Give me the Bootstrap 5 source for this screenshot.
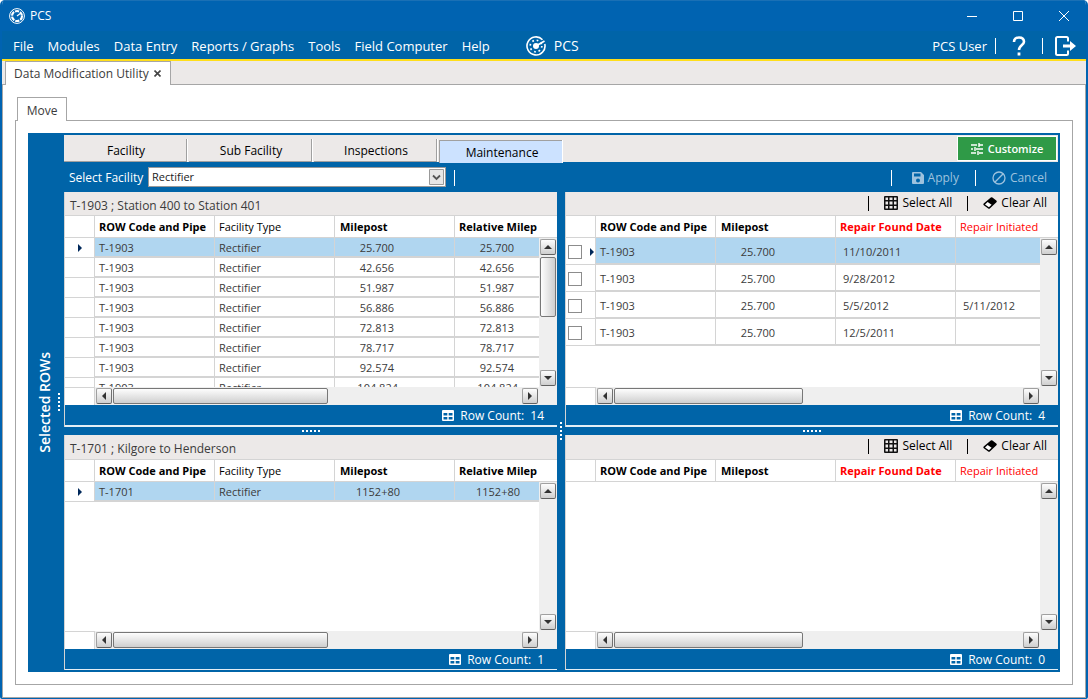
<!DOCTYPE html>
<html lang="en">
<head>
<meta charset="utf-8">
<meta name="viewport" content="width=device-width, initial-scale=1">
<title>PCS - Data Modification Utility</title>
<link href="https://cdn.jsdelivr.net/npm/bootstrap@5.3.0/dist/css/bootstrap.min.css" rel="stylesheet">
<style>
:root{--pcs:#0064a8;--strip:#ece9e8;--edge:#a6a6a6;--grid:#d4d4d4}
body{font-family:"Open Sans","Noto Sans",sans-serif;font-size:12px;line-height:16px;color:#3b3b3b;background:#fff}
button{font:inherit;line-height:inherit}
.app{height:100vh;min-height:560px;border:2px solid #0063b1;border-top:0;border-bottom-width:1px;border-radius:5px 5px 2px 2px;overflow:hidden;background:#fff}
.titlebar{height:31px;background:#0063b1;color:#fff;padding-left:6px;border-top:1px solid #1a70b5}
.winbtn{width:46px;height:30px;border:0;background:none;color:#fff;padding:0;display:flex;align-items:center;justify-content:center}
.winbtns{margin-right:-1px}
.menubar{height:28px;background:var(--pcs);color:#fff;font-size:13px;padding:1px 9px 0 11px}
.menubar a,.menubar button{color:#fff;text-decoration:none}
.menubar .links{gap:14px;padding-top:1px}
.brandtext{font-size:14px}
.iconbtn{border:0;background:none;padding:0;display:flex;align-items:center}
.vsep{width:1px;height:16px;background:#fff}
.vsep-dark{width:1px;height:15px;background:#000}
.tabstrip{height:26px;background:var(--strip);border-top:2px solid #ffde1a;padding-left:3px;border-bottom:1px solid var(--edge)}
.doctab{height:24px;border:1px solid var(--edge);border-bottom:0;background:#fff;padding:0 9px 0 8px;gap:5px;position:relative;z-index:1}
.workarea{padding:12px;border:solid var(--edge);border-width:0 1px 1px}
.workarea,.frame,.bluebox,.desk{min-height:0;min-width:0}
.movetab{height:25px;width:50px;margin:0 0 -1px 2px;border:1px solid var(--edge);border-bottom:0;background:#fff;z-index:1;padding:2px 0 0;color:#3b3b3b}
.frame{border:1px solid var(--edge);padding:12px}
.bluebox{background:var(--pcs);padding:0 2px 2px 0}
.sidebar{width:36px;flex:none;position:relative}
.sidebar .caption{writing-mode:vertical-rl;transform:rotate(180deg);color:#fff;font-size:14px;font-weight:600;line-height:20px;position:absolute;left:7px;top:50%;margin-top:-50px}
.dots-v{width:2px;height:18px;background:repeating-linear-gradient(#fff 0 2px,transparent 2px 4px)}
.dots-h{width:18px;height:2px;background:repeating-linear-gradient(90deg,#fff 0 2px,transparent 2px 4px)}
.modes{height:27px;background:var(--strip);margin-top:2px;padding:1px 1px 0 0}
.mode{width:123px;height:23px;margin:3px 2px 0 0;border:solid #a0a0a0;border-width:0 1px 1px 0;box-shadow:1px 0 #fff;background:var(--strip);color:#000;padding:2px 0 0 2px}
.mode.on{background:#cce2ff;border-width:1px 0 0 1px;margin-top:4px;padding-top:1px}
.customize{height:25px;width:100px;background:#2f9a47;border:1px solid #27843c;outline:1px solid #fff;outline-offset:-1px;color:#fff;font-size:11px;font-weight:600;padding:0;gap:5px}
.toolbar{height:30px;color:#fff;padding:1px 11px 0 5px}
.toolbar label{width:78px;margin-right:1px}
.combo{width:298px;height:20px;border-radius:0;border:1px solid #999;background:#fff;font-size:11px;color:#222;padding:0 20px 0 3px;appearance:none;line-height:16px}
.combowrap{position:relative;margin-top:-2px}
.combowrap svg{position:absolute;right:2px;top:2px;pointer-events:none}
.toolbar .act{color:#9dc2de;border:0;background:none;padding:0;display:flex;align-items:center;gap:4px}
.panels{display:grid;grid-template-columns:1fr 8px 1fr;grid-template-rows:1fr 8px 1fr;min-height:0}
.hsplit,.vsplit{display:flex;align-items:center;justify-content:center}
.vsplit{grid-column:2;grid-row:1/4}
.panel{min-width:0;min-height:0;display:grid;grid-template-rows:23px 1fr 18px 22px;background:#fff;border-left:1px solid var(--grid)}
.panelhead{background:var(--strip);padding:6px 11px 0 5px;color:#3b3b3b}
.panelhead .tools{gap:15px;margin-top:-3px}
.panelhead button{color:#000;border:0;background:none;padding:0;display:flex;align-items:center;gap:4px}
.gridarea{display:grid;grid-template-columns:1fr 18px;min-height:0;min-width:0}
.view{overflow:hidden;min-width:0;min-height:0}
.data{table-layout:fixed;width:510px;border-collapse:separate;border-spacing:0;font-size:11px;line-height:16px}
.data th,.data td{padding:0 4px;border-right:1px solid var(--grid);overflow:hidden;white-space:nowrap}
.data th{height:23px;border-top:1px solid var(--grid);border-bottom:1px solid var(--grid);font-weight:400;color:#000}
.data th.strong{font-weight:700}
.data th.mile{padding-left:5px}
.data .need{color:#f00}
.data td{height:20px;border-bottom:2px solid var(--grid);padding-top:1px}
.data td:first-child{border-bottom-width:1px;text-align:center;padding:0}
.data.tall td{height:27px;padding-top:2px}
.data .n{text-align:right;padding-right:60px}
.data .wide{padding-right:56px}
.data .st{padding-right:54px}
.data .d{padding-left:7px}
.data .cur td:not(:first-child){background:#b0d6f0}
.data.tall .pick{display:flex;align-items:center;justify-content:space-between;padding:0 1px 0 2px}
.pick input{appearance:none;width:14px;height:14px;border:1px solid #8c8c8c;background:#fff;margin:0}
.arrow{display:inline-block;border:solid transparent;border-width:4px 0 4px 4px;border-left-color:#00285a}
.vbar{display:grid;grid-template-rows:23px 1fr}
.vbar .corner{border:solid var(--grid);border-width:1px 0}
.vtrack{background:#efefef;display:flex;flex-direction:column;padding:1px;min-height:0}
.sbtn{width:16px;height:16px;flex:none;border:1px solid #707070;border-color:#a0a0a0 #707070 #606060 #a0a0a0;border-radius:2px;background:linear-gradient(#fdfdfd,#cfcfcf);padding:0;display:flex;align-items:center;justify-content:center;color:#333}
.vrun,.hrun{flex:1;min-width:0;min-height:0}
.vthumb{width:16px;margin-top:2px;border:1px solid #777;border-radius:2px;background:linear-gradient(90deg,#fdfdfd,#cfcfcf)}
.hthumb{height:16px;margin-left:1px;border:1px solid #777;border-radius:2px;background:linear-gradient(#fdfdfd,#cfcfcf)}
.hbar{display:flex}
.hbar .stub{width:30px;border:solid var(--grid);border-width:1px 1px 0 0}
.htrack{flex:1;background:#efefef;display:flex;padding:1px 19px 1px 1px;min-width:0}
.foot{background:var(--pcs);color:#fff;border-bottom:1px solid #e4eef5;padding:1px 13px 0 0;gap:6px}
.upper .foot{border-bottom-width:2px}
.lower.panel{grid-template-rows:24px 1fr 18px 21px}
</style>
</head>
<body>
<svg width="0" height="0" class="d-none" aria-hidden="true">
  <symbol id="up" viewBox="0 0 8 8"><path d="M0 6 4 2l4 4z" fill="#333"/></symbol>
  <symbol id="down" viewBox="0 0 8 8"><path d="M0 2l4 4 4-4z" fill="#333"/></symbol>
  <symbol id="prev" viewBox="0 0 8 8"><path d="M6 0 2 4l4 4z" fill="#333"/></symbol>
  <symbol id="next" viewBox="0 0 8 8"><path d="M2 0l4 4-4 4z" fill="#333"/></symbol>
  <symbol id="rows" viewBox="0 0 12 11"><path fill="#fff" fill-rule="evenodd" d="M1 0h10q1 0 1 1v9q0 1-1 1H1q-1 0-1-1V1q0-1 1-1zM1.500 3v2.500h3.800V3zm5.200 0v2.500h3.800V3zM1.500 7v2.500h3.800V7zm5.200 0v2.500h3.800V7z"/></symbol>
  <symbol id="cells" viewBox="0 0 14 14"><path fill="#111" fill-rule="evenodd" d="M1 0h12q1 0 1 1v12q0 1-1 1H1q-1 0-1-1V1q0-1 1-1zM1.500 1.500v2.500H4V1.500zm4 0v2.500h3V1.500zm4.500 0v2.500h2.500V1.500zM1.500 5.500v3H4v-3zm4 0v3h3v-3zm4.500 0v3h2.500v-3zM1.500 10v2.500H4V10zm4 0v2.500h3V10zm4.500 0v2.500h2.500V10z"/></symbol>
  <symbol id="eraser" viewBox="0 0 14 12"><path fill="#000" d="M7.800.6Q8.600 0 9.400.6l3.900 3q.9.800.1 1.700L6.800 11.400q-.8.600-1.600 0L.8 8.200q-.9-.8-.1-1.700z"/><path fill="#fff" d="M4.600 5 2 7.400l3.900 2.900 2.700-2.500z"/></symbol>
</svg>
<div class="app d-flex flex-column">
  <header>
    <div class="titlebar d-flex align-items-center">
      <svg width="18" height="18" viewBox="0 0 18 18" fill="none" stroke="#fff"><circle cx="9" cy="9" r="7.400" stroke-width="1"/><circle cx="9" cy="9" r="5" stroke-width="2.200" stroke-dasharray="4.200 1.030"/><path d="M9 9l4-3" stroke-width="1.200"/></svg>
      <span class="ms-1">PCS</span>
      <div class="winbtns ms-auto d-flex">
        <button class="winbtn" aria-label="Minimize"><svg width="10" height="10"><path d="M0 5.500h10" stroke="#fff"/></svg></button>
        <button class="winbtn" aria-label="Maximize"><svg width="10" height="10"><path d="M.5.5h9v9h-9z" fill="none" stroke="#fff"/></svg></button>
        <button class="winbtn" aria-label="Close"><svg width="10" height="10"><path d="M0 0l10 10M10 0 0 10" stroke="#fff"/></svg></button>
      </div>
    </div>
    <nav class="menubar d-flex align-items-center">
      <div class="links d-flex">
        <a href="#">File</a><a href="#">Modules</a><a href="#">Data Entry</a><a href="#">Reports / Graphs</a><a href="#">Tools</a><a href="#">Field Computer</a><a href="#">Help</a>
      </div>
      <a href="#" class="d-flex align-items-center gap-2 ms-4 ps-2"><svg class="ms-1" width="20" height="20" viewBox="0 0 20 20" fill="none" stroke="#fff"><path d="M16.500 3.700A9 9 0 1 0 18.800 8" stroke-width="1.600"/><circle cx="10" cy="10" r="5.800" stroke-width="1.700" stroke-dasharray="1.700 2.855"/><circle cx="10" cy="10" r="3" fill="#fff" stroke="none"/><path d="M10 10l8.500-5" stroke-width="1.700"/></svg><span class="brandtext">PCS</span></a>
      <div class="ms-auto d-flex align-items-center">
        <span>PCS User</span><span class="vsep ms-2 me-3"></span>
        <button class="iconbtn" aria-label="Help topics"><svg width="14" height="20" viewBox="0 0 14 20"><path d="M2 6Q2 1.500 7 1.500T12 5.800C12 9 7 9 7 14" fill="none" stroke="#fff" stroke-width="2.600"/><path d="M5.600 16.500h2.800v3H5.600z" fill="#fff"/></svg></button>
        <span class="vsep ms-3 me-2"></span>
        <button class="iconbtn ms-1" aria-label="Log out"><svg width="22" height="20" viewBox="0 0 22 20"><path d="M13 5.500V2.500Q13 1 11.500 1h-9Q1 1 1 2.500v15Q1 19 2.500 19h9q1.500 0 1.500-1.500v-3" fill="none" stroke="#fff" stroke-width="2"/><path d="M8 8.500h7V5l6 5-6 5v-3.500H8z" fill="#fff"/></svg></button>
      </div>
    </nav>
    <div class="tabstrip d-flex align-items-start">
      <div class="doctab d-flex align-items-center"><span>Data Modification Utility</span><button class="iconbtn" aria-label="Close tab"><svg width="7" height="7"><path d="M.5.5l6 6M6.500.5l-6 6" stroke="#444" stroke-width="1.600"/></svg></button></div>
    </div>
  </header>
  <main class="workarea flex-fill d-flex flex-column">
    <button class="movetab">Move</button>
    <div class="frame flex-fill d-flex flex-column">
      <div class="bluebox flex-fill d-flex">
        <aside class="sidebar d-flex align-items-center justify-content-end pe-1"><span class="caption text-nowrap">Selected ROWs</span><span class="dots-v"></span></aside>
        <div class="desk flex-fill d-flex flex-column">
          <div class="modes d-flex align-items-start flex-shrink-0">
            <button class="mode">Facility</button><button class="mode">Sub Facility</button><button class="mode">Inspections</button><button class="mode on">Maintenance</button>
            <button class="customize ms-auto d-flex align-items-center justify-content-center"><svg width="12" height="12" viewBox="0 0 12 12"><path d="M0 2h6M8 2h4M8 0v4M0 6h2M5 6h7M4 4v4M0 10h5M8 10h4M7 8v4" stroke="#fff" stroke-width="1.400"/></svg>Customize</button>
          </div>
          <div class="toolbar d-flex align-items-center flex-shrink-0">
            <label for="fac">Select Facility</label>
            <div class="combowrap"><select id="fac" class="combo d-block"><option>Rectifier</option></select><svg width="15" height="16"><path d="M.5.5h14v15H.5z" fill="#e6e6e6" stroke="#999"/><path d="M4 6.500l3.500 3.500L11 6.500" fill="none" stroke="#555" stroke-width="1.800"/></svg></div>
            <span class="vsep ms-2"></span>
            <div class="ms-auto d-flex align-items-center">
              <span class="vsep me-3"></span>
              <button class="act ms-1"><svg width="12" height="12" viewBox="0 0 12 12"><path fill="#9dc2de" fill-rule="evenodd" d="M1 0h8l3 3v8q0 1-1 1H1q-1 0-1-1V1q0-1 1-1zm1 1.500V4.500h6.500v-3zM6 6.500A2 2 0 1 0 6 10.500 2 2 0 1 0 6 6.500z"/></svg>Apply</button>
              <span class="vsep mx-3"></span>
              <button class="act"><svg width="14" height="14" viewBox="0 0 14 14" fill="none" stroke="#9dc2de" stroke-width="1.300"><circle cx="7" cy="7" r="6"/><path d="M2.800 11.200l8.400-8.400"/></svg>Cancel</button>
            </div>
          </div>
          <div class="panels flex-fill">
            <section class="panel upper left" style="grid-area:1/1">
              <div class="panelhead">T-1903 ; Station 400 to Station 401</div>
              <div class="gridarea">
                <div class="view">
                  <table class="data"><colgroup><col style="width:30px"><col><col><col><col></colgroup>
                    <thead><tr><th></th><th class="strong">ROW Code and Pipe</th><th>Facility Type</th><th class="strong mile">Milepost</th><th class="strong">Relative Milep</th></tr></thead>
                    <tbody>
                      <tr class="cur"><td><i class="arrow"></i></td><td>T-1903</td><td>Rectifier</td><td class="n">25.700</td><td class="n">25.700</td></tr>
                      <tr><td></td><td>T-1903</td><td>Rectifier</td><td class="n">42.656</td><td class="n">42.656</td></tr>
                      <tr><td></td><td>T-1903</td><td>Rectifier</td><td class="n">51.987</td><td class="n">51.987</td></tr>
                      <tr><td></td><td>T-1903</td><td>Rectifier</td><td class="n">56.886</td><td class="n">56.886</td></tr>
                      <tr><td></td><td>T-1903</td><td>Rectifier</td><td class="n">72.813</td><td class="n">72.813</td></tr>
                      <tr><td></td><td>T-1903</td><td>Rectifier</td><td class="n">78.717</td><td class="n">78.717</td></tr>
                      <tr><td></td><td>T-1903</td><td>Rectifier</td><td class="n">92.574</td><td class="n">92.574</td></tr>
                      <tr><td></td><td>T-1903</td><td>Rectifier</td><td class="n wide">104.824</td><td class="n wide">104.824</td></tr>
                    </tbody></table>
                </div>
                <div class="vbar"><div class="corner"></div><div class="vtrack"><button class="sbtn" aria-label="Up"><svg width="8" height="8"><use href="#up"/></svg></button><div class="vrun"><div class="vthumb" style="height:52%"></div></div><button class="sbtn" aria-label="Down"><svg width="8" height="8"><use href="#down"/></svg></button></div></div>
              </div>
              <div class="hbar"><div class="stub"></div><div class="htrack"><button class="sbtn" aria-label="Left"><svg width="8" height="8"><use href="#prev"/></svg></button><div class="hrun"><div class="hthumb" style="width:52.500%"></div></div><button class="sbtn" aria-label="Right"><svg width="8" height="8"><use href="#next"/></svg></button></div></div>
              <div class="foot d-flex align-items-center justify-content-end"><svg width="12" height="11"><use href="#rows"/></svg><span>Row Count:</span><span>14</span></div>
            </section>
            <section class="panel upper right" style="grid-area:1/3">
              <div class="panelhead"><div class="tools d-flex align-items-center justify-content-end"><span class="vsep-dark"></span><button><svg width="14" height="14"><use href="#cells"/></svg>Select All</button><span class="vsep-dark"></span><button><svg width="14" height="12"><use href="#eraser"/></svg>Clear All</button></div></div>
              <div class="gridarea">
                <div class="view">
                  <table class="data tall"><colgroup><col style="width:30px"><col><col><col><col></colgroup>
                    <thead><tr><th></th><th class="strong">ROW Code and Pipe</th><th class="strong mile">Milepost</th><th class="strong need">Repair Found Date</th><th class="need">Repair Initiated</th></tr></thead>
                    <tbody>
                      <tr class="cur"><td><div class="pick"><input type="checkbox" aria-label="Row 1"><i class="arrow"></i></div></td><td>T-1903</td><td class="n">25.700</td><td class="d">11/10/2011</td><td></td></tr>
                      <tr><td><div class="pick"><input type="checkbox" aria-label="Row 2"></div></td><td>T-1903</td><td class="n">25.700</td><td class="d">9/28/2012</td><td></td></tr>
                      <tr><td><div class="pick"><input type="checkbox" aria-label="Row 3"></div></td><td>T-1903</td><td class="n">25.700</td><td class="d">5/5/2012</td><td class="d">5/11/2012</td></tr>
                      <tr><td><div class="pick"><input type="checkbox" aria-label="Row 4"></div></td><td>T-1903</td><td class="n">25.700</td><td class="d">12/5/2011</td><td></td></tr>
                    </tbody></table>
                </div>
                <div class="vbar"><div class="corner"></div><div class="vtrack"><button class="sbtn" aria-label="Up"><svg width="8" height="8"><use href="#up"/></svg></button><div class="vrun"></div><button class="sbtn" aria-label="Down"><svg width="8" height="8"><use href="#down"/></svg></button></div></div>
              </div>
              <div class="hbar"><div class="stub"></div><div class="htrack"><button class="sbtn" aria-label="Left"><svg width="8" height="8"><use href="#prev"/></svg></button><div class="hrun"><div class="hthumb" style="width:46%"></div></div><button class="sbtn" aria-label="Right"><svg width="8" height="8"><use href="#next"/></svg></button></div></div>
              <div class="foot d-flex align-items-center justify-content-end"><svg width="12" height="11"><use href="#rows"/></svg><span>Row Count:</span><span>4</span></div>
            </section>
            <div class="hsplit" style="grid-area:2/1"><span class="dots-h"></span></div>
            <div class="vsplit"><span class="dots-v"></span></div>
            <div class="hsplit" style="grid-area:2/3"><span class="dots-h"></span></div>
            <section class="panel lower left" style="grid-area:3/1">
              <div class="panelhead">T-1701 ; Kilgore to Henderson</div>
              <div class="gridarea">
                <div class="view">
                  <table class="data"><colgroup><col style="width:30px"><col><col><col><col></colgroup>
                    <thead><tr><th></th><th class="strong">ROW Code and Pipe</th><th>Facility Type</th><th class="strong mile">Milepost</th><th class="strong">Relative Milep</th></tr></thead>
                    <tbody><tr class="cur"><td><i class="arrow"></i></td><td>T-1701</td><td>Rectifier</td><td class="n st">1152+80</td><td class="n st">1152+80</td></tr></tbody></table>
                </div>
                <div class="vbar"><div class="corner"></div><div class="vtrack"><button class="sbtn" aria-label="Up"><svg width="8" height="8"><use href="#up"/></svg></button><div class="vrun"></div><button class="sbtn" aria-label="Down"><svg width="8" height="8"><use href="#down"/></svg></button></div></div>
              </div>
              <div class="hbar"><div class="stub"></div><div class="htrack"><button class="sbtn" aria-label="Left"><svg width="8" height="8"><use href="#prev"/></svg></button><div class="hrun"><div class="hthumb" style="width:52.500%"></div></div><button class="sbtn" aria-label="Right"><svg width="8" height="8"><use href="#next"/></svg></button></div></div>
              <div class="foot d-flex align-items-center justify-content-end"><svg width="12" height="11"><use href="#rows"/></svg><span>Row Count:</span><span>1</span></div>
            </section>
            <section class="panel lower right" style="grid-area:3/3">
              <div class="panelhead"><div class="tools d-flex align-items-center justify-content-end"><span class="vsep-dark"></span><button><svg width="14" height="14"><use href="#cells"/></svg>Select All</button><span class="vsep-dark"></span><button><svg width="14" height="12"><use href="#eraser"/></svg>Clear All</button></div></div>
              <div class="gridarea">
                <div class="view">
                  <table class="data"><colgroup><col style="width:30px"><col><col><col><col></colgroup>
                    <thead><tr><th></th><th class="strong">ROW Code and Pipe</th><th class="strong mile">Milepost</th><th class="strong need">Repair Found Date</th><th class="need">Repair Initiated</th></tr></thead></table>
                </div>
                <div class="vbar"><div class="corner"></div><div class="vtrack"><button class="sbtn" aria-label="Up"><svg width="8" height="8"><use href="#up"/></svg></button><div class="vrun"></div><button class="sbtn" aria-label="Down"><svg width="8" height="8"><use href="#down"/></svg></button></div></div>
              </div>
              <div class="hbar"><div class="stub"></div><div class="htrack"><button class="sbtn" aria-label="Left"><svg width="8" height="8"><use href="#prev"/></svg></button><div class="hrun"><div class="hthumb" style="width:46%"></div></div><button class="sbtn" aria-label="Right"><svg width="8" height="8"><use href="#next"/></svg></button></div></div>
              <div class="foot d-flex align-items-center justify-content-end"><svg width="12" height="11"><use href="#rows"/></svg><span>Row Count:</span><span>0</span></div>
            </section>
          </div>
        </div>
      </div>
    </div>
  </main>
</div>
<script src="https://cdn.jsdelivr.net/npm/bootstrap@5.3.0/dist/js/bootstrap.bundle.min.js"></script>
</body>
</html>
